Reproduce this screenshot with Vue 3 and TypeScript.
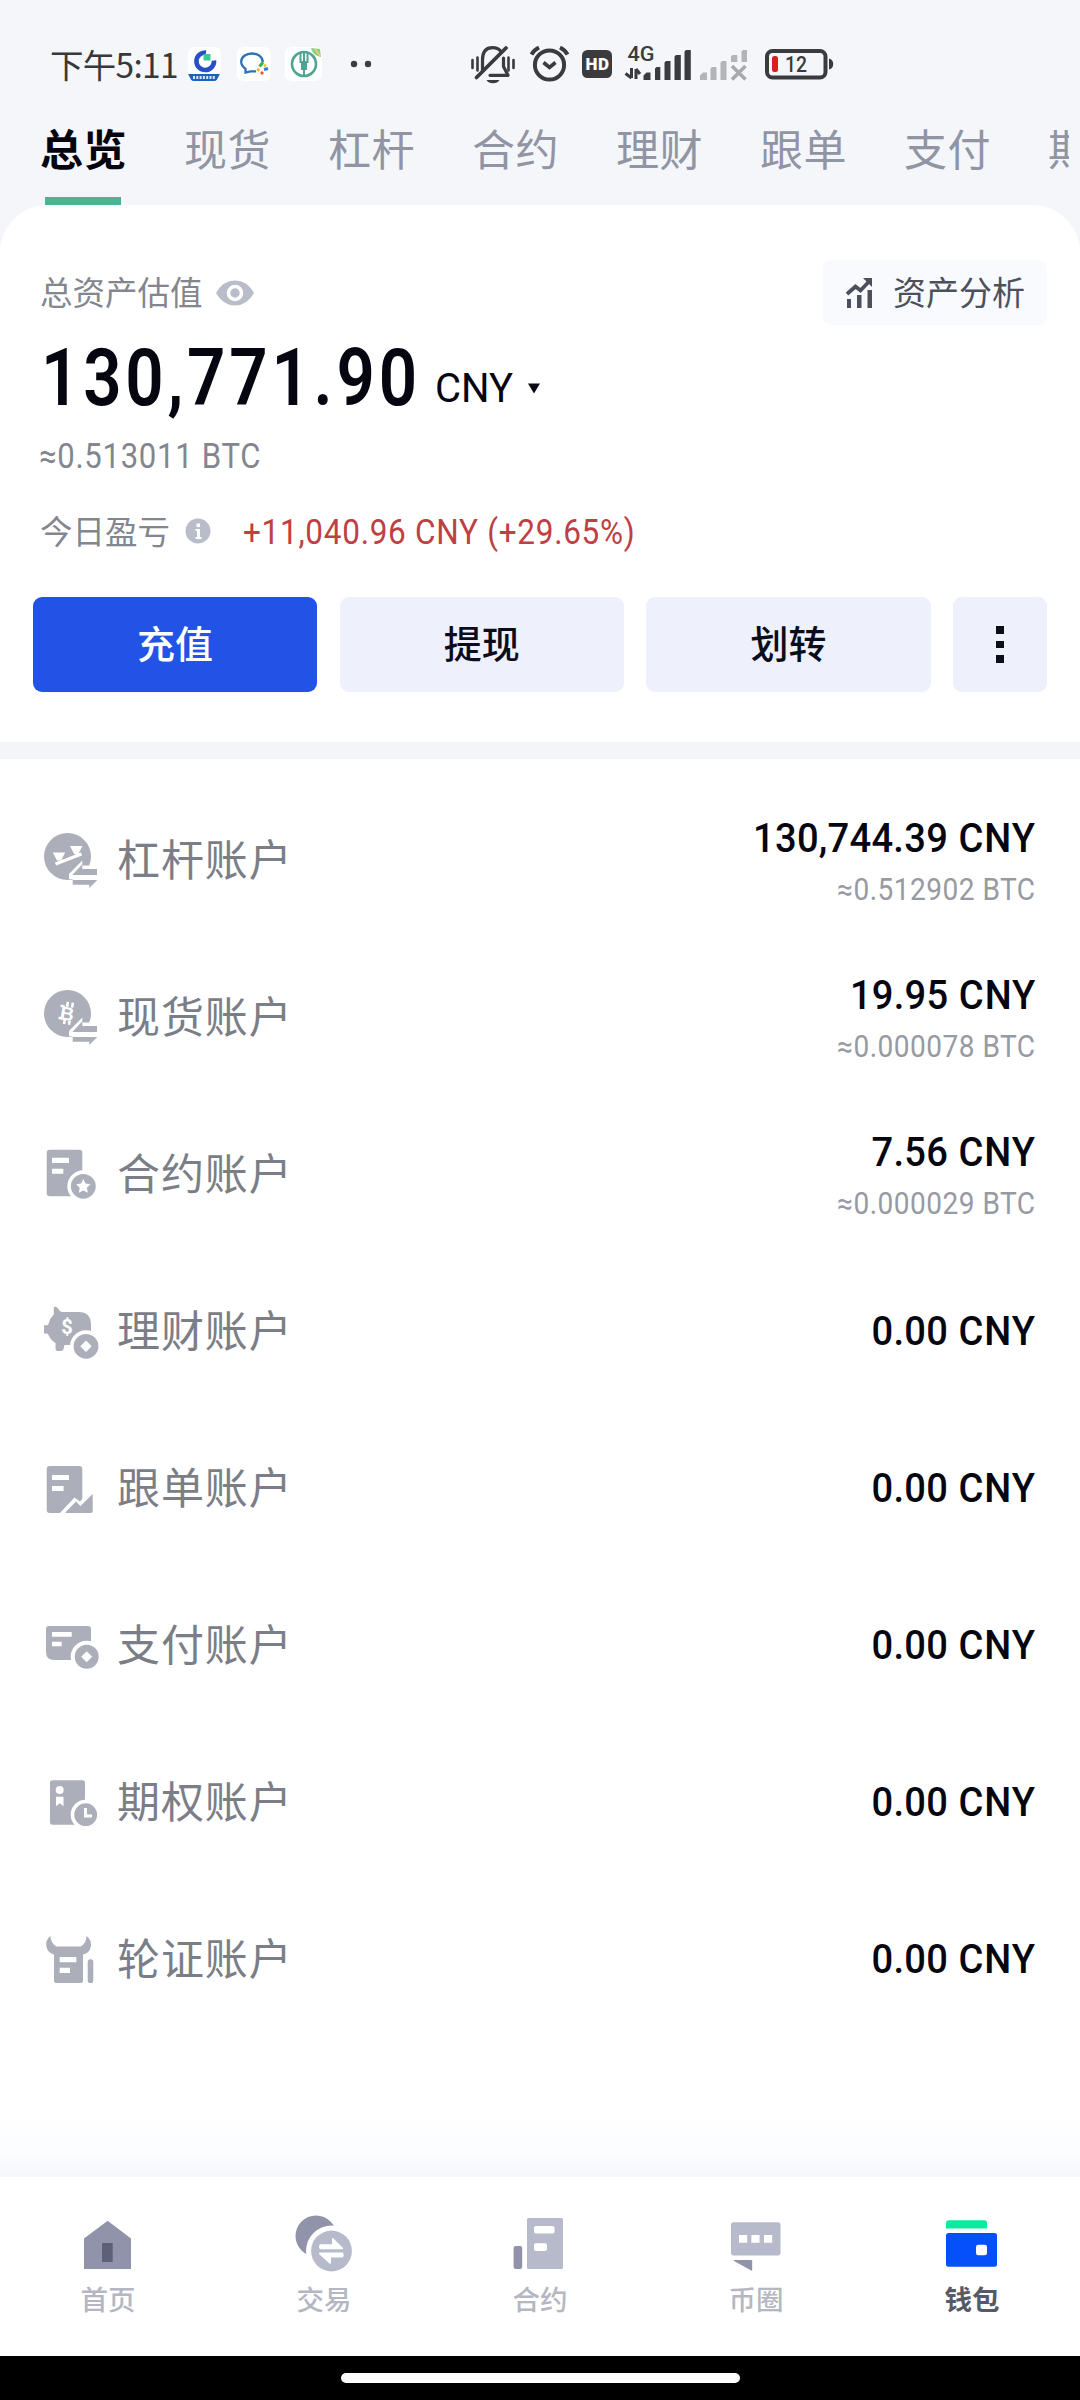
<script setup lang="ts">
interface Account {
  icon: string
  name: string
  amount: string
  btc?: string
}

const tabs: string[] = ['总览', '现货', '杠杆', '合约', '理财', '跟单', '支付', '期权']

const accounts: Account[] = [
  { icon: 'margin', name: '杠杆账户', amount: '130,744.39', btc: '≈0.512902 BTC' },
  { icon: 'spot', name: '现货账户', amount: '19.95', btc: '≈0.000078 BTC' },
  { icon: 'futures', name: '合约账户', amount: '7.56', btc: '≈0.000029 BTC' },
  { icon: 'earn', name: '理财账户', amount: '0.00' },
  { icon: 'copy', name: '跟单账户', amount: '0.00' },
  { icon: 'pay', name: '支付账户', amount: '0.00' },
  { icon: 'option', name: '期权账户', amount: '0.00' },
  { icon: 'warrant', name: '轮证账户', amount: '0.00' },
]

const navItems = [
  { icon: 'home', label: '首页' },
  { icon: 'trade', label: '交易' },
  { icon: 'contract', label: '合约' },
  { icon: 'community', label: '币圈' },
  { icon: 'wallet', label: '钱包' },
]
</script>

<template>
  <div class="screen">
    <header class="status">
      <span class="time">下午5:11</span>
      <svg class="apps" width="186" height="44" viewBox="186 42 186 44">
        <rect x="188" y="47" width="33" height="34" rx="7" fill="#fff" />
        <path d="M206 52.500a8.800 8.800 0 1 0 8 8" fill="none" stroke="#2750c8" stroke-width="4.600" />
        <rect x="203.500" y="54" width="7" height="6.500" fill="#3fc795" />
        <path d="M188 74h32l-3 5.500q-1 1.500-3 1.500h-20q-2 0-3-1.500z" fill="#1d62b8" />
        <path d="M193 77.500h23" stroke="#d5e5f7" stroke-width="3" stroke-dasharray="2 1.300" />
        <rect x="237" y="47" width="34" height="34" rx="7" fill="#fff" />
        <path d="M256 71.300h-5.500l-5 1.200v-3.700c-3-2-4.300-4.300-4.300-7 0-5 4.800-8.300 10.800-8.300s10.800 3.600 10.800 8.800" fill="none" stroke="#2a73b8" stroke-width="2.300" />
        <path d="M263 62.500l-3.500 4" stroke="#35b24a" stroke-width="3" />
        <path d="M264 69.500l4-1" stroke="#2e7fd6" stroke-width="3" />
        <path d="M257 69l2.500 1.500" stroke="#f4b63c" stroke-width="3" />
        <path d="M261 74l2-2" stroke="#e3593c" stroke-width="3" />
        <path d="M264 64.500l2 2" stroke="#f4c63c" stroke-width="2.500" />
        <rect x="285" y="47" width="37" height="34" rx="7" fill="#fff" />
        <circle cx="304" cy="64" r="12" fill="none" stroke="#4fa591" stroke-width="2.600" />
        <path d="M300.500 52v10h7V52M304 51v25M302 62v7h4v-7z" fill="none" stroke="#4fa591" stroke-width="2" />
        <path d="M311 48l9 1 1 8q-8-1-10-9z" fill="#8ccf8a" />
        <path d="M315 49l5 7" stroke="#f0d35c" stroke-width="1.500" />
        <circle cx="354" cy="64" r="3.200" fill="#3d3d40" />
        <circle cx="368" cy="64" r="3.200" fill="#3d3d40" />
      </svg>
      <svg class="sys" width="370" height="44" viewBox="468 42 370 44" fill="none" stroke="#3b3b3e">
        <g stroke-width="3.200" stroke-linecap="round">
          <path d="M472.500 60v8M477.500 57.500v13M508.500 57.500v13M513.500 60v8" stroke-width="2.600" />
          <path d="M482.500 70V60q0-12.300 10-12.300 5.500 0 8 3.300M503.500 58v8.500l4.500 8.800h-18" stroke-linejoin="round" />
          <path d="M506 48l-29.500 29.500" stroke-width="3.800" />
        </g>
        <path d="M486.500 80h13q-2 3.300-6.500 3.300t-6.500-3.300z" fill="#3b3b3e" stroke="none" />
        <circle cx="549.500" cy="65" r="14.600" stroke-width="4" />
        <path d="M543.500 62.500l6 5 6-5" stroke-width="3.600" />
        <path d="M531.500 54.500q2.500-4.500 7.500-7M567.500 54.500q-2.500-4.500-7.500-7" stroke-width="4" />
        <rect x="582" y="50" width="30" height="28" rx="5.500" fill="#3b3b3e" stroke="none" />
        <text x="585.500" y="69.700" textLength="23.500" class="hd">HD</text>
        <text x="627.500" y="60.500" textLength="27" lengthAdjust="spacingAndGlyphs" class="g4">4G</text>
        <path d="M631.500 68v10M631.500 78l-6-4.500M636 79V69M636 69l4 5" stroke-width="3" />
        <g fill="#3b3b3e" stroke="none">
          <path d="M643.500 80v-4.500l3-3h4V80zM655 80V68.500l1.500-1.500h3.800v13zM664.500 80V62.500l1.500-1.500h4.500v19zM674.500 80V56.500l1.500-1.500h4.800v25zM684.500 80V51.500l1.500-1.500h4.800v30z" />
        </g>
        <g fill="#b3b4b8" stroke="none">
          <path d="M700 80v-4.500l3-3h4V80zM710.500 80V68.500l1.500-1.500h4.500v13zM720.500 80V62.500l1.500-1.500h4.500v19zM731 62v-5.500l1.500-1.500h4.800v7zM741.500 62V51.500l1.500-1.500h4v12z" />
        </g>
        <path d="M732 66l13.500 13.500M745.500 66L732 79.500" stroke="#a8a9ad" stroke-width="3.600" />
        <rect x="767" y="51" width="58.500" height="26.500" rx="5.500" stroke-width="4" />
        <path d="M829 58.500q4.200 1 4.200 5.500t-4.200 5.500z" fill="#3b3b3e" stroke="none" />
        <rect x="772" y="56" width="6" height="16" rx="2.500" fill="#dc1d1d" stroke="none" />
        <text x="785" y="72" textLength="22" lengthAdjust="spacingAndGlyphs" class="batt">12</text>
      </svg>
    </header>

    <nav class="tabs">
      <span v-for="(tab, i) in tabs" :key="tab" class="tab" :class="{ active: i === 0 }">{{ tab }}</span>
    </nav>

    <section class="summary">
      <div class="row-top">
        <span class="caption">总资产估值</span>
        <svg class="eye" width="40" height="26" viewBox="0 0 40 26">
          <path d="M1 13Q8 .500 20 .500T39 13Q32 25.500 20 25.500T1 13z" fill="#b9bdca" />
          <circle cx="20" cy="13" r="6.500" fill="none" stroke="#fff" stroke-width="3.600" />
        </svg>
        <button class="analysis">
          <svg width="28" height="32" viewBox="0 0 28 32">
            <path d="M2 17L10.500 9.500l5 4L24 4.500" fill="none" stroke="#4c4f5c" stroke-width="3.800" />
            <path d="M18 1h9v9zM2 22h4v9H2zM12 18h4.500v13H12zM22.500 13H27v18h-4.500z" fill="#4c4f5c" />
          </svg>
          <span>资产分析</span>
        </button>
      </div>
      <div class="total">
        <span class="total-value"><span class="num">130,771.90</span></span>
        <span class="total-unit">CNY</span>
        <svg width="12" height="11" viewBox="0 0 12 11"><path d="M0 .500h12L6 10.500z" fill="#080912" /></svg>
      </div>
      <div class="approx"><span class="num">≈0.513011 BTC</span></div>
      <div class="pnl">
        <span class="caption">今日盈亏</span>
        <svg width="26" height="26" viewBox="0 0 26 26">
          <circle cx="13" cy="13" r="12.500" fill="#b9bdca" />
          <path d="M11.500 5.500h3.500v3.500h-3.500zM10.500 11h4.500v8h1.500v2h-6v-2H12v-6h-1.500z" fill="#fff" />
        </svg>
        <span class="pnl-value num">+11,040.96 CNY (+29.65%)</span>
      </div>
      <div class="actions">
        <button class="btn primary">充值</button>
        <button class="btn">提现</button>
        <button class="btn">划转</button>
        <button class="btn more"><i /><i /><i /></button>
      </div>
    </section>

    <main class="accounts">
      <div v-for="a in accounts" :key="a.name" class="account">
        <svg class="icon" width="56" height="56" viewBox="0 0 56 56" fill="#acafba">
          <template v-if="a.icon === 'margin' || a.icon === 'spot'">
            <circle cx="24.500" cy="24.500" r="23.500" />
            <g v-if="a.icon === 'margin'" fill="#fff">
              <path d="M12.500 32L38.500 22" stroke="#fff" stroke-width="3.200" />
              <path d="M9.800 20.500h12.400l-4.200 8h-4zM27 14h12.500l-4.300 8.300h-4z" />
            </g>
            <g v-else transform="rotate(10 25 24)" stroke="#fff" stroke-width="2.600">
              <text x="17.500" y="31.500" class="coin">B</text>
              <path d="M23 13v5M28 13v5M23 31v4.500M28 31v4.500M16.500 18.200h4M16.500 30.300h4" />
            </g>
            <path d="M26 47V42L39.300 28.500V33.500H56V47z" fill="#fff" />
            <path d="M29.300 43L39.300 32.300V37H54v6zM29.700 48h24.600l-8 8v-3.300H29.700z" />
          </template>
          <template v-else-if="a.icon === 'futures'">
            <rect x="3.700" y="3.700" width="35.600" height="46.500" rx="3" />
            <path d="M9 11.700h17V17H9zM9 22.700h11.300v5H9z" fill="#fff" />
            <circle cx="40.300" cy="40.300" r="16" fill="#fff" />
            <circle cx="40.300" cy="40.300" r="12.400" />
            <path d="M40.300 33l2.200 4.600 5 .700-3.600 3.500.900 5-4.500-2.400-4.500 2.400.900-5-3.600-3.500 5-.700z" fill="#fff" />
          </template>
          <template v-else-if="a.icon === 'earn'">
            <path d="M12 3.500Q10.500 3.500 10.800 6V11.500Q7 15 5.500 21Q5 22.300 3.500 22.300H1V30.500H4Q5 30.500 5.500 32Q8 37.500 12.500 40V45.500Q12.500 48 15 48H18Q20 48 20.700 45.500L21.500 42H36L48 30V22Q48 9 35.500 9H20Q17.500 9 16.500 7.500Q14.500 4 12 3.500z" />
            <text x="24" y="31.300" class="dollar">$</text>
            <circle cx="43" cy="43.300" r="16" fill="#fff" />
            <circle cx="43" cy="43.300" r="12.400" />
            <path d="M43 37.600l5.700 5.700-5.700 5.700-5.700-5.700z" fill="#fff" />
          </template>
          <template v-else-if="a.icon === 'copy'">
            <rect x="3.700" y="6" width="35.600" height="47" rx="3" />
            <path d="M9 15h17v5H9zM9 26h11.600v5H9z" fill="#fff" />
            <path d="M16 54L31.500 37.500l5.500 4L42 36V54z" fill="#fff" />
            <path d="M22.700 52L33 41.500l4.500 4.500L49.700 34V51q0 2-2 2H23q-1 0-.300-1z" />
          </template>
          <template v-else-if="a.icon === 'pay'">
            <path d="M6 9h39q3 0 3 3v31H11q-8 0-8-8V12q0-3 3-3z" />
            <path d="M9 15h19.700v4.700H9zM9 24.700h9.700v4.500H9z" fill="#fff" />
            <circle cx="43.700" cy="39.700" r="16" fill="#fff" />
            <circle cx="43.700" cy="39.700" r="12" />
            <path d="M43.700 34.200l5.500 5.500-5.500 5.500-5.500-5.500z" fill="#fff" />
          </template>
          <template v-else-if="a.icon === 'option'">
            <rect x="7" y="6.300" width="35" height="44.400" rx="2.500" />
            <circle cx="16.700" cy="16" r="4" fill="#fff" />
            <path d="M13 22.700h7.500v9.500l-3.700-3-3.800 3z" fill="#fff" />
            <circle cx="42.700" cy="40.700" r="15" fill="#fff" />
            <circle cx="42.700" cy="40.700" r="11.400" />
            <path d="M42.500 34v8h6.500" fill="none" stroke="#fff" stroke-width="3" />
          </template>
          <template v-else>
            <path d="M7.500 5Q2 9 3.500 16Q5 22 11 23.500V50q0 2 2 2H38q2 0 2-2V23.500Q46.500 22 47.800 16Q49 9 43.500 5Q43.500 12.500 37.500 15.500H13.700Q7.500 12.500 7.500 5z" />
            <path d="M16.700 26h16.600v5.300H16.700zM16.700 36.700H27V42H16.700z" fill="#fff" />
            <rect x="44.700" y="28.300" width="5.600" height="23.700" rx="2.600" />
          </template>
        </svg>
        <span class="name">{{ a.name }}</span>
        <div class="values" :class="{ double: a.btc }">
          <span class="amount num"><span class="figure">{{ a.amount }}</span> CNY</span>
          <span v-if="a.btc" class="btc num">{{ a.btc }}</span>
        </div>
      </div>
    </main>

    <div class="fade" />

    <footer class="nav">
      <a v-for="(n, i) in navItems" :key="n.label" class="nav-item" :class="{ current: i === 4 }">
        <svg width="60" height="60" viewBox="0 0 60 60">
          <template v-if="n.icon === 'home'">
            <path d="M29.700 7.700L53 25.500V56H6V25.500z" fill="#9093aa" />
            <rect x="24" y="30" width="10.700" height="19" fill="#5c6079" />
          </template>
          <template v-else-if="n.icon === 'trade'">
            <circle cx="22" cy="23" r="20.500" fill="#9093aa" />
            <circle cx="37.500" cy="38" r="25.500" fill="#fff" />
            <circle cx="37.500" cy="38" r="20.400" fill="#b7bacb" />
            <path d="M26 31.300h12V26q.500-1.500 1.500-.500L49 35q.500 1.300-1 1.300H26q-2-2.500 0-5zM49 39.600q1.500 2.500 0 5H37V50q-.500 1.500-1.500.500L25 41q-.500-1.400 1-1.400z" fill="#fff" />
          </template>
          <template v-else-if="n.icon === 'contract'">
            <rect x="3.600" y="33" width="8.600" height="23" rx="2" fill="#9093aa" />
            <rect x="17" y="5" width="36" height="51" rx="1.500" fill="#b7bacb" />
            <rect x="24" y="13" width="20.600" height="7.600" rx="2" fill="#fff" />
            <rect x="24" y="30.300" width="13" height="7.700" rx="2" fill="#fff" />
          </template>
          <template v-else-if="n.icon === 'community'">
            <rect x="5" y="9.300" width="49.500" height="33.200" rx="2.500" fill="#b7bacb" />
            <path d="M13 22h8.200v7.800H13zM25.400 22h8.200v7.800h-8.200zM38 22h8.200v7.800H38z" fill="#fff" />
            <path d="M8.500 47H25q1.200 0 1.200 1.200V57q0 1-1 .500L8 48q-.700-.800.500-1z" fill="#9093aa" />
          </template>
          <template v-else>
            <path d="M7 7.300H42.500q2.500 0 2.500 2.500v5.600H4V10.300q0-3 3-3z" fill="#0ceaa0" />
            <rect x="4" y="20" width="51" height="33.800" rx="2.500" fill="#0550fa" />
            <rect x="34" y="31.700" width="11" height="10.600" rx="2.200" fill="#fff" />
          </template>
        </svg>
        <span>{{ n.label }}</span>
      </a>
    </footer>
    <div class="gesture"><i /></div>
  </div>
</template>

<style>
body {
  margin: 0;
  background: #fff;
}
</style>

<style scoped>
.screen {
  width: 1080px;
  height: 2400px;
  display: flex;
  flex-direction: column;
  overflow: hidden;
  background: #f4f6fa;
  font-family: "Noto Sans CJK SC", sans-serif;
  color: #05060f;
}
svg {
  flex: none;
  display: block;
}
button {
  border: 0;
  padding: 0;
  font: inherit;
  color: inherit;
}
.num {
  font-family: Roboto, "Noto Sans CJK SC", sans-serif;
  display: block;
  white-space: nowrap;
  transform-origin: left center;
}

/* status bar */
.status {
  flex: none;
  height: 86px;
  display: flex;
  align-items: flex-end;
  padding-left: 50px;
}
.time {
  width: 136px;
  height: 44px;
  line-height: 43px;
  font-size: 33.5px;
  letter-spacing: -0.7px;
  white-space: nowrap;
  color: #38383b;
}
.sys {
  margin-left: 96px;
}
.sys text {
  stroke: none;
  fill: #3b3b3e;
  font-family: Roboto, sans-serif;
}
.sys .hd {
  font-size: 17px;
  font-weight: 900;
  fill: #fff;
}
.sys .g4 {
  font-size: 20px;
  font-weight: 500;
}
.sys .batt {
  font-size: 22px;
  font-weight: 500;
}

/* category tabs */
.tabs {
  flex: none;
  box-sizing: border-box;
  width: 1069px;
  height: 119px;
  padding-left: 40px;
  display: flex;
  gap: 58px;
  overflow: hidden;
}
.tab {
  flex: none;
  width: 86px;
  height: 119px;
  font-size: 43px;
  line-height: 122px;
  letter-spacing: 0.6px;
  white-space: nowrap;
  color: #9094a3;
  position: relative;
}
.tab.active {
  color: #04050f;
  font-weight: 700;
}
.tab.active::after {
  content: "";
  position: absolute;
  left: 5px;
  bottom: 0;
  width: 76px;
  height: 8px;
  background: #4bb592;
}

/* balance summary */
.summary {
  flex: none;
  box-sizing: border-box;
  height: 537px;
  padding: 55px 33px 0;
  background: #fff;
  border-radius: 48px 48px 0 0;
}
.row-top {
  height: 65px;
  display: flex;
  align-items: center;
  padding-left: 7px;
}
.caption {
  margin-top: -3px;
  font-size: 32.500px;
  line-height: 46px;
  color: #83868e;
}
.eye {
  margin-left: 12px;
}
.analysis {
  margin-left: auto;
  width: 224px;
  height: 65px;
  border-radius: 8px;
  background: #f8fafe;
  display: flex;
  align-items: center;
  padding-left: 22px;
  gap: 20px;
  font-size: 33px;
  color: #4c505c;
}
.analysis span {
  line-height: 46px;
  margin-top: -4px;
}
.total {
  height: 100px;
  display: flex;
  align-items: center;
  padding-left: 7px;
}
.total-value {
  width: 395px;
  margin-top: 6px;
  font-size: 80px;
  font-weight: 600;
  line-height: 104px;
}
.total-value .num {
  margin-left: 1px;
  letter-spacing: 4.500px;
  transform: scaleX(0.84);
}
.total-unit {
  width: 93px;
  margin-top: 27px;
  font-family: Roboto, sans-serif;
  font-size: 40px;
  line-height: 46px;
}
.total svg {
  margin-top: 26px;
}
.approx {
  height: 60px;
  padding-left: 6px;
  font-size: 34.500px;
  line-height: 62px;
  color: #83868e;
}
.approx .num {
  letter-spacing: 0.8px;
  transform: scaleX(0.9);
}
.pnl {
  height: 50px;
  margin-top: 21px;
  padding-left: 7px;
  display: flex;
  align-items: center;
}
.pnl svg {
  margin-left: 15px;
}
.pnl-value {
  margin-left: 32px;
  font-size: 35px;
  line-height: 50px;
  margin-top: 3px;
  letter-spacing: 0.8px;
  color: #bd4043;
  transform: scaleX(0.9);
}
.actions {
  margin-top: 41px;
  display: flex;
  gap: 22.500px;
}
.btn {
  flex: 1;
  box-sizing: border-box;
  height: 95px;
  padding-bottom: 6px;
  border-radius: 9px;
  background: #eef0fb;
  font-size: 38px;
  font-weight: 500;
  color: #0b0d1a;
}
.btn.primary {
  background: #2353e6;
  color: #fff;
}
.btn.more {
  flex: none;
  width: 94px;
  padding-bottom: 0;
  display: flex;
  flex-direction: column;
  align-items: center;
  justify-content: center;
  gap: 7px;
}
.btn.more i {
  width: 7.500px;
  height: 7.500px;
  background: #0b0d1a;
}

/* account list */
.accounts {
  flex: none;
  box-sizing: border-box;
  height: 1295px;
  border-top: 17px solid #f3f5f8;
  padding-top: 22px;
  background: #fff;
}
.account {
  height: 157px;
  display: flex;
  align-items: center;
  padding: 0 44px 0 43px;
}
.name {
  margin: -5px 0 0 18px;
  font-size: 43px;
  letter-spacing: 0.9px;
  line-height: 60px;
  color: #7b7e87;
}
.values {
  margin-left: auto;
  display: flex;
  flex-direction: column;
  align-items: flex-end;
}
.values.double {
  padding-top: 6px;
}
.values .num {
  transform-origin: right center;
}
.amount {
  font-size: 40.500px;
  font-weight: 500;
  line-height: 54px;
  letter-spacing: 1px;
  transform: scaleX(0.94);
}
.figure {
  letter-spacing: 0.3px;
}
.btc {
  font-size: 30.500px;
  line-height: 50px;
  letter-spacing: 0.5px;
  color: #979aa2;
  transform: scaleX(0.92);
}
.coin {
  font: 700 19px "Liberation Sans", sans-serif;
  fill: #fff;
  stroke: none;
}
.dollar {
  font: 700 20px Roboto, sans-serif;
  fill: #fff;
  text-anchor: middle;
}

/* bottom navigation */
.fade {
  flex: none;
  height: 140px;
  background: linear-gradient(#fff 50%, #fcfdfe 80%, #f6f7fb);
}
.nav {
  flex: none;
  height: 179px;
  display: flex;
  background: #fff;
}
.nav-item {
  flex: 1;
  display: flex;
  flex-direction: column;
  align-items: center;
  padding-top: 36px;
  font-size: 27.500px;
  line-height: 40px;
  font-weight: 500;
  color: #b4b7c2;
}
.nav-item span {
  margin-top: 5px;
}
.nav-item.current {
  color: #565a68;
  font-weight: 700;
}
.gesture {
  flex: none;
  height: 44px;
  background: #000;
  display: flex;
  justify-content: center;
}
.gesture i {
  width: 399px;
  height: 10px;
  margin-top: 17px;
  border-radius: 5px;
  background: #fff;
}
</style>
